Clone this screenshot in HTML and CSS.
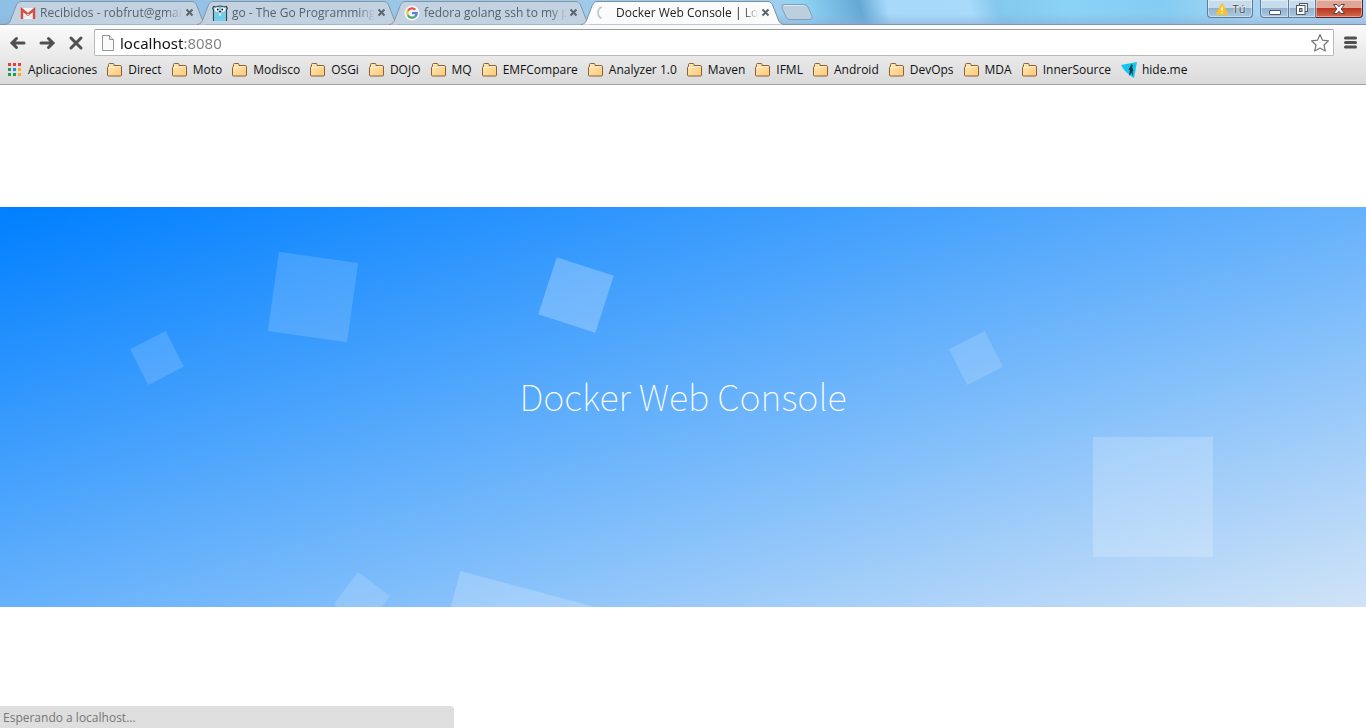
FILE: index.html
```html
<!DOCTYPE html>
<html lang="es">
<head>
<meta charset="utf-8">
<title>Docker Web Console | Login</title>
<meta name="viewport" content="width=device-width, initial-scale=1">
<link rel="stylesheet" href="styles.css">
</head>
<body>
<svg class="defs" aria-hidden="true">
  <defs>
    <linearGradient id="folder-fill" x1="0" y1="0" x2="1" y2="1">
      <stop offset="0" stop-color="#ffeab8"/><stop offset="1" stop-color="#ffc877"/>
    </linearGradient>
    <symbol id="tab-shape" viewBox="0 0 204 25">
      <path d="M0 24.500C4 24 5 22 6 19L11 6C12.500 2.500 14 1.500 17 1.500H186C189 1.500 190.500 2.500 192 6L197 19C198 22 200 24.500 204 24.500"/>
    </symbol>
    <symbol id="close" viewBox="0 0 9 9">
      <path d="M1.500 1.500L7.500 7.500M7.500 1.500L1.500 7.500" fill="none" stroke="currentColor" stroke-width="1.900"/>
    </symbol>
    <symbol id="folder" viewBox="0 0 16 14">
      <path d="M1.500 3.500V1.500Q1.500 .5 2.500 .5H6Q7 .5 7 1.500V2.500H13Q14.500 2.500 14.500 4V12Q14.500 13 13.500 13H1.500Q.5 13 .5 12V4.500Q.5 3.500 1.500 3.500Z" fill="url(#folder-fill)" stroke="#896039"/>
      <path d="M1.500 4.500H7.500L8.500 3.500H13.500" fill="none" stroke="#fff0cc"/>
    </symbol>
  </defs>
</svg>

<header class="browser">
  <div class="titlebar">
    <nav class="tabs" aria-label="Pestañas">
      <div class="tab">
        <svg class="tab-bg"><use href="#tab-shape"/></svg>
        <svg class="tab-icon" viewBox="0 0 16 16"><path d="M2 3H14V14H2Z" fill="#f2f2f2"/><path d="M2 14V4.500L8 9.500L14 4.500V14" fill="none" stroke="#d54b40" stroke-width="2.400"/><path d="M3.500 13L8 9L12.500 13" fill="none" stroke="#d5d5d5"/></svg>
        <a class="tab-title" href="#">Recibidos - robfrut@gmai</a>
        <button class="tab-close" aria-label="Cerrar"><svg viewBox="0 0 9 9"><use href="#close"/></svg></button>
      </div>
      <div class="tab">
        <svg class="tab-bg"><use href="#tab-shape"/></svg>
        <svg class="tab-icon" viewBox="0 0 16 16"><path d="M2.500 16V5Q2.500 1.500 8 1.500T13.500 5V16Z" fill="#72cdec"/><path d="M1.500 16V5L.7 3.500L1.500 1.500L4 2Q8 0 12 2L14.500 1.500L15.300 3.500L14.500 5V16" fill="none" stroke="#2b4953" stroke-width="1.200"/><circle cx="5" cy="4.500" r="2.200" fill="#fff"/><circle cx="11" cy="4.500" r="2.200" fill="#fff"/><circle cx="5.700" cy="4.500" r=".9"/><circle cx="10.300" cy="4.500" r=".9"/><path d="M6.500 7H9.500V8.500H6.500Z" fill="#e8c7a4"/><path d="M7.200 8.500H8.800V10.500H7.200Z" fill="#fff"/><path d="M7 6H9V7.200H7Z" fill="#222"/></svg>
        <a class="tab-title" href="#">go - The Go Programming</a>
        <button class="tab-close" aria-label="Cerrar"><svg viewBox="0 0 9 9"><use href="#close"/></svg></button>
      </div>
      <div class="tab">
        <svg class="tab-bg"><use href="#tab-shape"/></svg>
        <svg class="tab-icon" viewBox="0 0 16 16"><circle cx="8" cy="8" r="7.500" fill="#f4f7fa"/><g fill="none" stroke-width="2.200"><path d="M11.300 4.700A4.700 4.700 0 0 0 3.900 5.700" stroke="#e3574b"/><path d="M3.900 5.700A4.700 4.700 0 0 0 3.900 10.300" stroke="#f0be33"/><path d="M3.900 10.300A4.700 4.700 0 0 0 11 11.600" stroke="#42a866"/><path d="M11 11.600A4.700 4.700 0 0 0 12.700 8.200H8" stroke="#4d86dc"/></g></svg>
        <a class="tab-title" href="#">fedora golang ssh to my p</a>
        <button class="tab-close" aria-label="Cerrar"><svg viewBox="0 0 9 9"><use href="#close"/></svg></button>
      </div>
      <div class="tab tab-active">
        <svg class="tab-bg"><use href="#tab-shape"/></svg>
        <svg class="tab-icon" viewBox="0 0 16 16"><path d="M6 2Q2 3.500 2 7.500T5.500 13.500" fill="none" stroke="#b9c8da" stroke-width="1.800"/></svg>
        <a class="tab-title" href="#" aria-current="page">Docker Web Console | Log</a>
        <button class="tab-close" aria-label="Cerrar"><svg viewBox="0 0 9 9"><use href="#close"/></svg></button>
      </div>
      <button class="new-tab" aria-label="Nueva pestaña"><svg viewBox="0 0 32 16"><path d="M3 .5H23Q26 .5 27 3L31 12Q32 15.500 29 15.500H9Q6 15.500 5 13L1 4Q0 .5 3 .5Z" fill="#bccfdf" stroke="#829db5"/><path d="M3 1.500H23" stroke="#dce8f1"/></svg></button>
    </nav>
    <div class="window-buttons">
      <button class="win-btn profile"><svg viewBox="0 0 14 13"><path d="M7 1L13 12H1Z" fill="#ffc222" stroke="#ffc222" stroke-linejoin="round" stroke-width="1.400"/><path d="M7 4V8.500M7 9.800V11" stroke="#fff" stroke-width="1.500"/></svg><span>Tú</span></button>
      <div class="win-group">
        <button class="win-btn minimize" aria-label="Minimizar"><svg viewBox="0 0 14 12"><rect x="1.500" y="7.500" width="11" height="4" rx=".5" fill="#fff" stroke="#535766"/></svg></button>
        <button class="win-btn restore" aria-label="Restaurar"><svg viewBox="0 0 14 12"><rect x="4.500" y=".5" width="8" height="8" fill="#eee" stroke="#535766"/><rect x="1.500" y="2.500" width="8.500" height="9" fill="#fff" stroke="#535766"/><rect x="4.500" y="5.500" width="2.500" height="3" fill="#9bb4cd" stroke="#535766"/></svg></button>
        <button class="win-btn quit" aria-label="Cerrar ventana"><svg viewBox="0 0 14 12"><path d="M1.500 1.500H5L7 3.800L9 1.500H12.500L9.200 6L12.500 10.500H9L7 8.200L5 10.500H1.500L4.800 6Z" fill="#fff" stroke="#5a4048"/></svg></button>
      </div>
    </div>
  </div>

  <div class="toolbar">
    <button class="tool" aria-label="Atrás"><svg viewBox="0 0 18 18"><path d="M7.500 4.500L3 9L7.500 13.500M3.500 9H15"/></svg></button>
    <button class="tool" aria-label="Adelante"><svg viewBox="0 0 18 18"><path d="M10.500 4.500L15 9L10.500 13.500M14.500 9H3"/></svg></button>
    <button class="tool" aria-label="Detener"><svg viewBox="0 0 18 18"><path d="M4 4L14 14M14 4L4 14"/></svg></button>
    <form class="address">
      <svg class="page-icon" viewBox="0 0 12 16"><path d="M.5 .5H7.500L11.500 4.500V15.500H.5Z" fill="#fafafa" stroke="#959595"/><path d="M7.500 .5V4.500H11.500" fill="#e4e4e4" stroke="#959595"/></svg>
      <input class="url" type="text" value="localhost:8080" aria-label="Dirección" spellcheck="false">
      <button class="star" type="button" aria-label="Añadir a marcadores"><svg viewBox="0 0 20 20"><path d="M10 1.500L12.500 7.200L18.500 7.800L14 12L15.300 18L10 15L4.700 18L6 12L1.500 7.800L7.500 7.200Z" fill="#fff" stroke="#777" stroke-width="1.200" stroke-linejoin="round"/></svg></button>
    </form>
    <button class="menu" aria-label="Menú"><svg viewBox="0 0 13 13"><path d="M1.500 2H11.500M1.500 6.500H11.500M1.500 11H11.500" stroke="#505050" stroke-width="3" stroke-linecap="round"/></svg></button>
  </div>

  <nav class="bookmarks" aria-label="Marcadores">
    <a href="#"><svg class="apps" viewBox="0 0 14 14"><path d="M0 0H3V3H0ZM5 0H8V3H5ZM10 0H13V3H10Z" fill="#ed3b36"/><path d="M0 5H3V8H0ZM0 10H3V13H0ZM5 10H8V13H5Z" fill="#209b55"/><path d="M5 5H8V8H5Z" fill="#2f85f4"/><path d="M10 5H13V8H10ZM10 10H13V13H10Z" fill="#f5b11a"/></svg>Aplicaciones</a>
    <a href="#"><svg><use href="#folder"/></svg>Direct</a>
    <a href="#"><svg><use href="#folder"/></svg>Moto</a>
    <a href="#"><svg><use href="#folder"/></svg>Modisco</a>
    <a href="#"><svg><use href="#folder"/></svg>OSGi</a>
    <a href="#"><svg><use href="#folder"/></svg>DOJO</a>
    <a href="#"><svg><use href="#folder"/></svg>MQ</a>
    <a href="#"><svg><use href="#folder"/></svg>EMFCompare</a>
    <a href="#"><svg><use href="#folder"/></svg>Analyzer 1.0</a>
    <a href="#"><svg><use href="#folder"/></svg>Maven</a>
    <a href="#"><svg><use href="#folder"/></svg>IFML</a>
    <a href="#"><svg><use href="#folder"/></svg>Android</a>
    <a href="#"><svg><use href="#folder"/></svg>DevOps</a>
    <a href="#"><svg><use href="#folder"/></svg>MDA</a>
    <a href="#"><svg><use href="#folder"/></svg>InnerSource</a>
    <a href="#"><svg class="hide-me" viewBox="0 0 16 16"><path d="M0 3L16 0L13 16Q4 11 0 3Z" fill="#12c5ef"/><path d="M10.500 2L12 3.500L11 5L12.500 9L11.500 9L12 15L10.500 11L8 14L9 8L7.500 8L9 5Z" fill="#123a49"/></svg>hide.me</a>
  </nav>
</header>

<main class="page">
  <section class="hero">
    <ul class="squares" aria-hidden="true">
      <li class="sq sq-1"></li>
      <li class="sq sq-2"></li>
      <li class="sq sq-3"></li>
      <li class="sq sq-4"></li>
      <li class="sq sq-5"></li>
      <li class="sq sq-6"></li>
      <li class="sq sq-7"></li>
    </ul>
    <h1>Docker Web Console</h1>
  </section>
</main>
<div class="status" role="status">Esperando a localhost...</div>
</body>
</html>
```
FILE: styles.css
```css
* { box-sizing: border-box; }
body {
  margin: 0;
  min-height: 100vh;
  display: flex;
  flex-direction: column;
  background: #fff;
  font: 12px/16px "Open Sans", "Noto Sans", sans-serif;
  color: #111;
}
button { margin: 0; padding: 0; border: 0; background: none; font: inherit; color: inherit; }
a { color: inherit; text-decoration: none; }
svg { display: block; flex: none; }
.defs { position: absolute; width: 0; height: 0; }

.browser {
  border-bottom: 1px solid #a3a3a3;
  background: linear-gradient(#fbfbfb 25px, #dadada 84px);
}
.titlebar {
  display: flex;
  justify-content: space-between;
  height: 25px;
  border-bottom: 1px solid #8096ab;
  background:
    linear-gradient(transparent 60%, rgba(140, 170, 210, .5)),
    linear-gradient(75deg, #8ebfe5 0, #a5cdeb 56%, #8fd2f5 59%, #64a9d5 63%, #a6d9fa 65%, #a8dafa 71%, #83c8ed 73%, #8ad2f6 78%, #84ccf2 85%, #a6d5f1 91%, #b2d4ef 100%);
}
.tabs { display: flex; padding-left: 5px; }
.tab {
  position: relative;
  display: flex;
  align-items: center;
  width: 204px;
  height: 25px;
  margin-right: -12px;
  padding: 0 13px 0 15px;
  color: #56636e;
}
.tab-bg {
  position: absolute;
  inset: 0;
  width: 204px;
  height: 25px;
  fill: #c3d2e0;
  stroke: #8296a8;
}
.tab-active { z-index: 1; color: #222; }
.tab-active .tab-bg { fill: #fbfbfb; stroke: #7890a6; }
.tab-icon { position: relative; width: 16px; height: 16px; margin-right: 4px; }
.tab-title {
  position: relative;
  flex: 1;
  overflow: hidden;
  white-space: nowrap;
  mask-image: linear-gradient(90deg, #000 88%, transparent);
}
.tab-close { position: relative; padding: 2px; }
.tab-close svg { width: 9px; height: 9px; color: #58626b; }
.new-tab { align-self: center; margin-left: 8px; }
.new-tab svg { width: 32px; height: 16px; }

.window-buttons { display: flex; gap: 7px; padding-right: 3px; }
.win-btn {
  display: flex;
  align-items: center;
  justify-content: center;
  height: 18px;
  border: 1px solid #5f7c98;
  border-top: 0;
  background: linear-gradient(#c6dced 50%, #92b1cd 50%, #a9c9e2);
  box-shadow: inset 0 0 0 1px rgba(255, 255, 255, .4);
}
.win-btn svg { width: 14px; height: 12px; }
.profile {
  gap: 4px;
  width: 46px;
  border-radius: 0 0 4px 4px;
  font-size: 11px;
  color: #444;
  text-shadow: 0 0 2px #fff, 0 0 2px #fff;
}
.win-group { display: flex; }
.minimize { width: 29px; border-radius: 0 0 0 4px; }
.restore { width: 27px; border-left: 0; }
.quit {
  width: 47px;
  border-left: 0;
  border-color: #5b2430;
  border-radius: 0 0 4px 0;
  background: linear-gradient(#e0a594 50%, #bb3620 50%, #cf6a4c);
}

.toolbar { display: flex; align-items: center; padding: 4px 9px 0 3px; }
.tool { display: flex; justify-content: center; width: 29px; }
.tool svg { width: 18px; height: 18px; fill: none; stroke: #505050; stroke-width: 3; stroke-linecap: round; }
.address {
  display: flex;
  align-items: center;
  flex: 1;
  height: 27px;
  margin: 0 10px 0 4px;
  padding: 0 3px 0 7px;
  border: 1px solid #b8b8b8;
  border-top-color: #9d9d9d;
  border-radius: 2px;
  background: #fff;
}
.page-icon { width: 12px; height: 16px; }
.url {
  flex: 1;
  min-width: 0;
  margin-left: 6px;
  padding: 0;
  border: 0;
  outline: 0;
  font: 15px/20px "Noto Sans", "Open Sans", sans-serif;
  color: transparent;
  background: linear-gradient(90deg, #111 64px, #808080 64px);
  background-clip: text;
}
.star svg { width: 20px; height: 20px; }
.menu svg { width: 13px; height: 13px; }

.bookmarks {
  display: flex;
  gap: 10px;
  height: 28px;
  padding: 0 8px 1px;
  white-space: nowrap;
}
.bookmarks a { display: flex; align-items: center; gap: 5px; }
.bookmarks svg { width: 16px; height: 14px; }
.bookmarks .apps { width: 14px; height: 14px; margin-right: 1px; }
.bookmarks .hide-me { height: 16px; }

.page {
  display: flex;
  flex: 1;
  flex-direction: column;
  justify-content: center;
  padding-top: 1px;
}
.hero {
  position: relative;
  display: flex;
  align-items: center;
  justify-content: center;
  height: 400px;
  overflow: hidden;
  background: linear-gradient(to bottom right, #007fff, #7abbfb 60%, #d0e3f7);
}
.hero h1 {
  position: relative;
  margin: 0;
  padding-bottom: 24px;
  font: 100 36px/48px "Noto Sans CJK JP", "Noto Sans", sans-serif;
  color: #fff;
}
.squares { margin: 0; padding: 0; list-style: none; }
.sq { position: absolute; width: 40px; height: 40px; background: rgba(255, 255, 255, .15); }
.sq-1 { left: 10%; top: 131px; transform: rotate(-27deg); }
.sq-2 { left: 20%; top: 50px; width: 80px; height: 80px; transform: rotate(8deg); }
.sq-3 { left: 25%; top: 373px; transform: rotate(37deg); }
.sq-4 { left: 40%; top: 58px; width: 60px; height: 60px; background: rgba(255, 255, 255, .25); transform: rotate(18deg); }
.sq-5 { left: 70%; top: 131px; transform: rotate(-27deg); }
.sq-6 { left: 80%; top: 230px; width: 120px; height: 120px; background: rgba(255, 255, 255, .2); }
.sq-7 { left: 32%; top: 382px; width: 160px; height: 160px; background: rgba(255, 255, 255, .2); transform: rotate(15deg); }

.status {
  position: fixed;
  left: 0;
  bottom: 0;
  width: 33.25%;
  padding: 4px 3px 2px;
  border-radius: 0 4px 0 0;
  background: #dedede;
  color: #777;
}
```
